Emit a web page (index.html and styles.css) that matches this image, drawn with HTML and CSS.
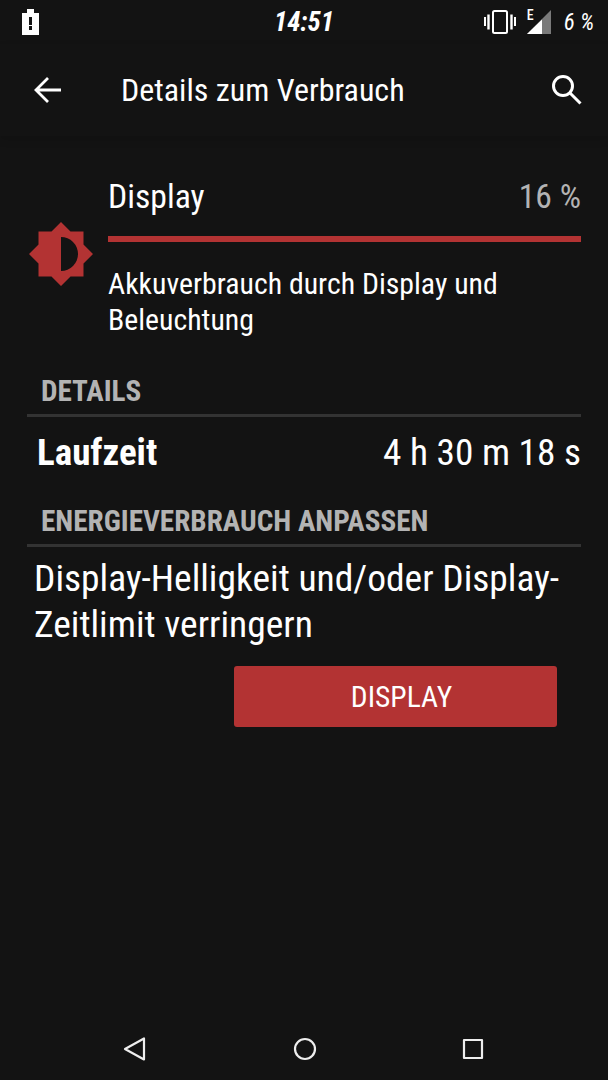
FILE: index.html
```html
<!DOCTYPE html>
<html>
<head>
  <title>Details zum Verbrauch</title>
  <link rel="stylesheet" href="styles.css">
</head>
<body>
  <div class="screen">
    <div class="status-bar">
      <svg class="battery" width="17" height="26" viewBox="0 0 17 26">
        <path d="M5 0h7v4h5v22H0V4h5z" fill="#fff"/>
        <rect x="7" y="8" width="3" height="8" fill="#131313"/>
        <rect x="7" y="17" width="3" height="4" fill="#131313"/>
      </svg>
      <span class="clock">14:51</span>
      <div class="status-right">
        <svg width="32" height="24" viewBox="0 0 32 24" fill="none" stroke="#fff" stroke-width="2">
          <rect x="9" y="1" width="14" height="22" rx="1.5"/>
          <path d="M4.500 4.500v15M27.500 4.500v15" stroke-width="2.400"/>
          <path d="M1 7v9M31 7v9"/>
        </svg>
        <span class="net-type">E</span>
        <svg class="signal" width="24" height="24" viewBox="0 0 24 24">
          <path d="M24 0v24H0z" fill="#7a7a7a"/>
          <path d="M15 9.500V24H0z" fill="#fff"/>
        </svg>
        <span class="battery-text">6 %</span>
      </div>
    </div>

    <header class="app-bar">
      <svg class="back-icon" width="28" height="28" viewBox="0 0 28 28" fill="none" stroke="#fff" stroke-width="2.800">
        <path d="M28 14H3M15 2L3 14l12 12"/>
      </svg>
      <h1 class="app-title">Details zum Verbrauch</h1>
      <svg class="search-icon" width="30" height="30" viewBox="0 0 30 30" fill="none" stroke="#fff" stroke-width="3">
        <circle cx="11" cy="11" r="9.500"/>
        <path d="M18 18L28.500 28.500"/>
      </svg>
    </header>

    <main class="content">
      <section class="usage">
        <svg class="usage-icon" width="64" height="64" viewBox="0 0 64 64">
          <path d="M32 0l9.500 9.500H54.500V22.500L64 32l-9.500 9.500V54.500H41.500L32 64l-9.500-9.500H9.500V41.500L0 32l9.500-9.500V9.500H22.500z" fill="#b33333"/>
          <path d="M32 15a17 17 0 0 1 0 34z" fill="#131313"/>
        </svg>
        <div class="usage-body">
          <div class="usage-head">
            <span class="usage-name">Display</span>
            <span class="usage-percent">16 %</span>
          </div>
          <div class="usage-bar"></div>
          <p class="usage-desc">Akkuverbrauch durch Display und Beleuchtung</p>
        </div>
      </section>

      <h2 class="section-title">DETAILS</h2>
      <div class="detail-row">
        <span class="detail-label">Laufzeit</span>
        <span class="detail-value">4 h 30 m 18 s</span>
      </div>

      <h2 class="section-title section-title-second">ENERGIEVERBRAUCH ANPASSEN</h2>
      <p class="tip">Display-Helligkeit und/oder Display-Zeitlimit verringern</p>
      <div class="actions">
        <button class="action-button">DISPLAY</button>
      </div>
    </main>

    <nav class="nav-bar">
      <svg width="24" height="26" viewBox="0 0 24 26" fill="none" stroke="#eee" stroke-width="2.200" stroke-linejoin="round">
        <path d="M21 2.500v21L2 13z"/>
      </svg>
      <svg width="24" height="24" viewBox="0 0 24 24" fill="none" stroke="#eee" stroke-width="2.200">
        <circle cx="12" cy="12" r="10"/>
      </svg>
      <svg width="22" height="22" viewBox="0 0 22 22" fill="none" stroke="#eee" stroke-width="2.200" stroke-linejoin="round">
        <rect x="2" y="2" width="18" height="18"/>
      </svg>
    </nav>
  </div>
</body>
</html>
```

FILE: styles.css
```css
* {
  box-sizing: border-box;
}

body {
  margin: 0;
  padding: 0;
  background-color: #131313;
  color: #fff;
  font-family: "Roboto Condensed", Roboto, sans-serif;
  font-stretch: 75%;
}

.screen {
  display: flex;
  flex-direction: column;
  height: 1080px;
  overflow: hidden;
}

.status-bar {
  display: flex;
  align-items: center;
  justify-content: space-between;
  height: 44px;
  padding: 0 14px 0 22px;
  position: relative;
}

.clock {
  font-size: 26.800px;
  font-weight: 700;
  font-style: italic;
  position: absolute;
  left: 274px;
}

.status-right {
  display: flex;
  align-items: center;
}

.net-type {
  font-size: 14px;
  font-weight: 500;
  line-height: 14px;
  margin: -14px 0 0 11px;
}

.signal {
  margin-left: -7px;
}

.battery-text {
  font-size: 23px;
  font-style: italic;
  margin-left: 13px;
}

.app-bar {
  display: flex;
  align-items: center;
  height: 92px;
  padding: 0 26px 0 33px;
  box-shadow: 0 4px 8px rgba(0, 0, 0, 0.12);
}

.app-title {
  flex: 1;
  margin: 0 0 0 60px;
  font-size: 32px;
  font-weight: 400;
}

.content {
  flex: 1;
  padding: 0 27px;
}

.usage {
  display: flex;
  align-items: flex-start;
  padding-top: 41px;
}

.usage-icon {
  flex: none;
  margin: 45px 15px 0 2px;
}

.usage-body {
  flex: 1;
}

.usage-head {
  display: flex;
  justify-content: space-between;
  align-items: baseline;
  font-size: 33.700px;
  line-height: 40px;
}

.usage-percent {
  color: #b3b3b3;
}

.usage-bar {
  height: 6px;
  margin-top: 19px;
  background-color: #b33333;
}

.usage-desc {
  margin: 24px 0 0;
  font-size: 29.800px;
  line-height: 36px;
}

.section-title {
  margin: 35px 0 0;
  padding: 0 0 5px 14px;
  border-bottom: 3px solid #333;
  color: #b3b3b3;
  font-size: 29.200px;
  font-weight: 700;
  line-height: 36px;
}

.section-title-second {
  margin-top: 27px;
}

.detail-row {
  display: flex;
  justify-content: space-between;
  align-items: baseline;
  padding: 12px 0 0 10px;
  font-size: 37.300px;
  line-height: 46px;
}

.detail-label {
  font-size: 37px;
  font-weight: 700;
}

.tip {
  margin: 8px 0 0 7px;
  font-size: 37.500px;
  line-height: 46px;
}

.actions {
  display: flex;
  justify-content: flex-end;
  padding: 19px 24px 0 0;
}

.action-button {
  width: 323px;
  height: 61px;
  padding: 0 0 0 12px;
  border: none;
  border-radius: 3px;
  background-color: #b33333;
  color: #fff;
  font-family: inherit;
  font-stretch: inherit;
  font-size: 29.500px;
}

.nav-bar {
  display: flex;
  align-items: center;
  justify-content: space-between;
  height: 62px;
  padding: 0 124px 0 123px;
}
```
